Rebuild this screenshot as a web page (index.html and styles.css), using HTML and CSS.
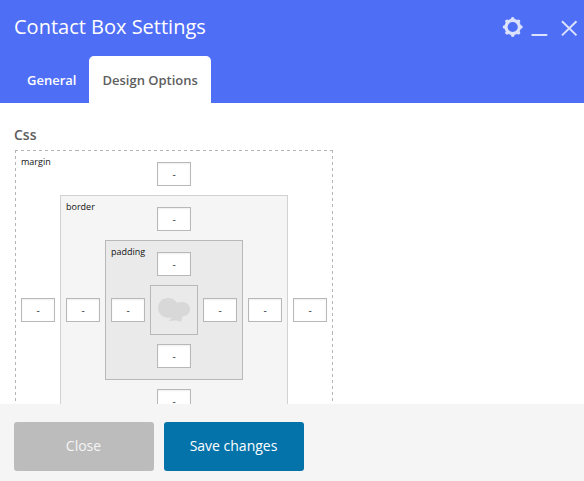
FILE: index.html
```html
<!DOCTYPE html>
<html lang="en">
<head>
<meta charset="utf-8">
<title>Contact Box Settings</title>
<link rel="stylesheet" href="styles.css">
</head>
<body>
<div class="panel">
  <header class="header">
    <div class="title-row">
      <h1 class="title">Contact Box Settings</h1>
      <div class="controls">
        <svg class="icon" width="82" height="24" viewBox="0 0 82 24">
          <g fill="none" stroke="currentColor">
            <circle cx="10.7" cy="12" r="6.7" stroke-width="3.2"/>
            <g stroke-width="4.2" stroke-linecap="round">
              <path stroke-width="3.6" d="M10.7 3.8V4.5M10.7 19.5V20.2M2.5 12H3.2M18.2 12H18.9M5 6.3L5.4 6.7M16 17.3L16.4 17.7M16.4 6.3L16 6.7M5.4 17.3L5 17.7"/>
            </g>
            <path d="M29.5 20H45.3" stroke-width="2"/>
            <path d="M60 6.2L74.5 20.4M74.5 6.2L60 20.4" stroke-width="2"/>
          </g>
        </svg>
      </div>
    </div>
    <nav class="tabs">
      <button class="tab">General</button>
      <button class="tab active">Design Options</button>
    </nav>
  </header>
  <main class="content">
    <h2 class="label">Css</h2>
    <div class="box margin">
      <span class="name">margin</span>
      <input class="top" value="-"><input class="left" value="-"><input class="right" value="-"><input class="bottom" value="-">
      <div class="box border">
        <span class="name">border</span>
        <input class="top" value="-"><input class="left" value="-"><input class="right" value="-"><input class="bottom" value="-">
        <div class="box padding">
          <span class="name">padding</span>
          <input class="top" value="-"><input class="left" value="-"><input class="right" value="-"><input class="bottom" value="-">
          <div class="core">
            <svg width="34" height="26" viewBox="0 0 34 26" fill="#d8d8d8">
              <path d="M11 1C15.5 1 18.5 3.3 20 6C21.5 5.2 23.5 5 25 5C30 5 33 8.5 33 12.3C33 16.5 29.5 19.3 25.5 19.5L24.2 24.7L19 23.6L12 24L14.5 20.5C6 21.8 1 17 1 11C1 5 5.5 1 11 1Z"/>
            </svg>
          </div>
        </div>
      </div>
    </div>
  </main>
  <footer class="footer">
    <button class="button close">Close</button>
    <button class="button save">Save changes</button>
  </footer>
</div>
</body>
</html>
```
FILE: styles.css
```css
* { box-sizing: border-box; }
body, h1, h2 { margin: 0; }
body, button, input { font-family: "Open Sans", sans-serif; }
.panel { height: 481px; display: flex; flex-direction: column; overflow: hidden; background: #fff; }
.header { flex: 0 0 103px; background: #4f6ef6; color: #fff; }
.title-row { height: 56px; padding: 0 0 2px 14px; display: flex; align-items: center; justify-content: space-between; }
.title { font-size: 20px; font-weight: 400; line-height: 28px; }
.controls { color: #dce2fd; }
.icon { display: block; }
.tabs { display: flex; padding-left: 14px; }
.tab { height: 47px; padding: 0 13px; border: 0; border-radius: 5px 5px 0 0; background: none; color: #fff; font-size: 13px; font-weight: 600; line-height: 18px; }
.tab.active { background: #fff; color: #5e5e5e; }
.content { flex: 1; min-height: 0; overflow: hidden; padding: 22px 15px 0; }
.label { margin-left: -1px; font-size: 14px; line-height: 19px; padding-bottom: 6px; font-weight: 600; color: #5e5e5e; }
.box { display: grid; grid-template-columns: 44px 1fr 44px; grid-template-rows: 44px 1fr 44px; border: 1px solid #b8b8b8; }
.margin {
  --dash: #b4b4b4 0 3px, transparent 3px 6.05px;
  width: 318px;
  height: 320px;
  border-color: transparent;
  background:
    repeating-linear-gradient(90deg, var(--dash)) top / 100% 1px no-repeat border-box,
    repeating-linear-gradient(90deg, var(--dash)) bottom / 100% 1px no-repeat border-box,
    repeating-linear-gradient(180deg, var(--dash)) left / 1px 100% no-repeat border-box,
    repeating-linear-gradient(180deg, var(--dash)) right / 1px 100% no-repeat border-box;
  background-origin: border-box;
}
.border { background: #f5f5f5; border-color: #d2d2d2; }
.padding { background: #eaeaea; }
.box > .box, .core { grid-area: 2 / 2; }
.core { display: flex; align-items: center; justify-content: center; border: 1px solid #b8b8b8; }
.name { grid-area: 1 / 1; padding: 4px 0 0 5px; font-size: 9px; line-height: 14px; color: #111; }
input { width: 34px; height: 24px; padding: 0; border: 1px solid #b8b8b8; background: #fff; box-shadow: inset 0 1px 2px rgba(0,0,0,.07); color: #32373c; font-size: 10px; text-align: center; place-self: center; }
.top { grid-area: 1 / 2; align-self: start; margin-top: 11px; }
.left { grid-area: 2 / 1; }
.right { grid-area: 2 / 3; }
.bottom { grid-area: 3 / 2; align-self: start; margin-top: 9px; }
.footer { flex: 0 0 77px; display: flex; gap: 10px; padding: 18px 14px 10px; background: #f5f5f5; }
.button { width: 140px; height: 49px; padding: 0 1px 2px 0; border: 0; border-radius: 3px; color: #fff; font-size: 14px; }
.close { background: #bcbcbc; color: #f5f5f5; }
.save { background: #0473aa; }
```
